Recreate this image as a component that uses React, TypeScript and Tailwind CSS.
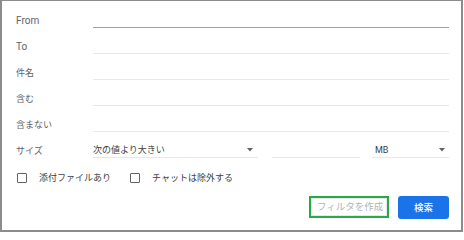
import React from "react";

const jp = { fontFamily: 'Roboto, "Noto Sans CJK JP", sans-serif' };

function Row({ label, active, latin }: { label: string; active?: boolean; latin?: boolean }) {
  return (
    <div className="flex h-[26px] items-end">
      <div
        className={`w-[77px] pb-[1px] leading-[12px] text-[#606366] ${latin ? "text-[10px]" : "text-[9px]"}`}
      >
        {label}
      </div>
      <div className="flex h-[20px] flex-1 flex-col justify-end">
        {active ? (
          <div className="h-[1px] w-full bg-[#78acd6]" />
        ) : (
          <div className="h-[1px] w-full bg-[#e8e8e8]" />
        )}
      </div>
    </div>
  );
}

function Arrow() {
  return (
    <svg width="6" height="4" viewBox="0 0 6 4" className="mb-[5px]">
      <path d="M0 0 L6 0 L3 3.5 Z" fill="#5f6368" />
    </svg>
  );
}

export default function App() {
  return (
    <div
      className="flex h-[232px] w-[463px] flex-col border-b-2 border-l-2 border-r-2 border-t border-[#8c8c8c] bg-white pl-[14px] pr-[12px] pt-[1px]"
      style={jp}
    >
      <Row label="From" active latin />
      <Row label="To" latin />
      <Row label="件名" />
      <Row label="含む" />
      <Row label="含まない" />
      <div className="flex h-[26px] items-end">
        <div className="w-[77px] pb-[1px] text-[9px] leading-[12px] text-[#606366]">サイズ</div>
        <div className="flex h-[20px] w-[165px] items-end justify-between border-b border-[#e8e8e8] pr-[5px]">
          <span className="pb-[1px] text-[9px] leading-[12px] text-[#3c4043]">次の値より大きい</span>
          <Arrow />
        </div>
        <div className="ml-[14px] h-[20px] w-[88px] border-b border-[#e8e8e8]" />
        <div className="ml-[12px] flex h-[20px] flex-1 items-end justify-between border-b border-[#e8e8e8] pl-[3px] pr-[4px]">
          <span className="pb-[1px] text-[9px] leading-[12px] text-[#3c4043]">MB</span>
          <Arrow />
        </div>
      </div>
      <div className="mt-[10px] flex h-[20px] items-center text-[9px] leading-[12px] text-[#3c4043]">
        <div className="ml-[1px] h-[10px] w-[10px] rounded-[1px] border-[1.5px] border-[#5f6368]" />
        <span className="ml-[12px] w-[91px] whitespace-nowrap">添付ファイルあり</span>
        <div className="h-[10px] w-[10px] rounded-[1px] border-[1.5px] border-[#5f6368]" />
        <span className="ml-[12px] whitespace-nowrap">チャットは除外する</span>
      </div>
      <div className="mt-[8px] flex items-start justify-end gap-[9px]">
        <div className="flex h-[22px] w-[80px] items-center border-[2px] border-[#2aa847] bg-white">
          <div className="flex h-full w-full items-center whitespace-nowrap border border-[#e8e8e8] pl-[5px] text-[9.5px] leading-[12px] text-[#b3b3b3]">
            フィルタを作成
          </div>
        </div>
        <div className="flex h-[23px] w-[51px] items-center justify-center rounded-[3px] bg-[#1a73e8] text-[9.5px] font-medium leading-[12px] text-white">
          検索
        </div>
      </div>
    </div>
  );
}
